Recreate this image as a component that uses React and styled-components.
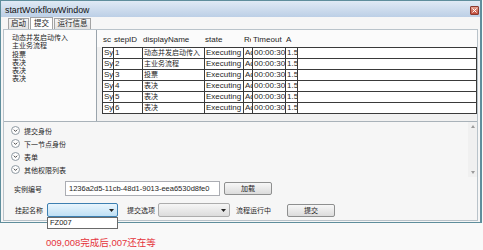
import React from 'react';
import styled, {createGlobalStyle} from 'styled-components';

const GlobalStyle = createGlobalStyle`
  body {
    margin: 0;
    background: #f9f9f9;
    font-family: "Liberation Sans", "Noto Sans CJK SC", sans-serif;
    color: #1e1e1e;
  }
`

const Window = styled.div`
  width: 479px;
  height: 221px;
  border: 1px solid #5f8e9c;
  border-right-width: 2px;
  background: #f6f6f6;
  display: flex;
  flex-direction: column;
`

const TitleBar = styled.div`
  height: 16px;
  box-sizing: border-box;
  padding: 2px 1px 0 4px;
  display: flex;
  align-items: center;
  justify-content: space-between;
  background: linear-gradient(#e0eaf5, #bccfe6);
  font-size: 8.8px;
  color: #111;
`

const CloseButton = styled.div`
  width: 7px;
  height: 7px;
  border: 1px solid #8a3a30;
  border-radius: 1px;
  background: linear-gradient(#e6a494, #c24a3a);
  display: flex;
  align-items: center;
  justify-content: center;
`

const TabStrip = styled.div`
  height: 12px;
  padding-left: 7px;
  display: flex;
  align-items: flex-end;
  gap: 1px;
`

const Tab = styled.div`
  width: ${({width}) => width}px;
  height: ${({active}) => (active ? 12 : 11)}px;
  box-sizing: border-box;
  border: 1px solid #a3a3a3;
  border-bottom: none;
  background: ${({active}) => (active ? '#ffffff' : 'linear-gradient(#f4f4f4, #e3e3e3)')};
  font-size: 7.5px;
  line-height: ${({active}) => (active ? 11 : 10)}px;
  text-align: center;
`

const Panel = styled.div`
  flex: 1;
  margin: 0 2px 1px 2px;
  border: 1px solid #b9c3ca;
  background: #f6f6f6;
  display: flex;
  flex-direction: column;
`

const TopArea = styled.div`
  height: 91px;
  display: flex;
  border-bottom: 1px solid #a9b2b9;
`

const ListBox = styled.div`
  width: 93px;
  border-right: 1px solid #9aa4ac;
  background: #fbfbfb;
  padding: 4px 0 0 8px;
  box-sizing: border-box;
`

const ListItem = styled.div`
  font-size: 7px;
  line-height: 8.3px;
`

const Grid = styled.div`
  flex: 1;
  background: #f1f1f1;
  display: flex;
  flex-direction: column;
`

const HeaderRow = styled.div`
  height: 17px;
  box-sizing: border-box;
  padding: 3px 0 0 5px;
  display: flex;
  background: #fbfbfb;
  font-size: 8px;
  line-height: 14px;
`

const RowBox = styled.div`
  margin-left: 5px;
  border: 1px solid #3a3a3a;
  border-top: none;
  background: #fff;
`

const Row = styled.div`
  height: 10px;
  display: flex;
  border-top: 1px solid #3a3a3a;
  font-size: 8px;
  line-height: 10px;
`

const Cell = styled.div`
  width: ${({w}) => w}px;
  flex-shrink: 0;
  box-sizing: border-box;
  padding-left: 1px;
  border-right: 1px solid ${({lined}) => (lined ? '#3a3a3a' : 'transparent')};
  overflow: hidden;
  white-space: nowrap;
  font-size: ${({cjk}) => (cjk ? 7 : 8)}px;
`

const Filler = styled.div`
  flex: 1;
`

const ExpanderArea = styled.div`
  height: 55px;
  display: flex;
`

const ExpanderList = styled.div`
  flex: 1;
  padding: 2px 0 0 7px;
`

const Expander = styled.div`
  height: 13px;
  display: flex;
  align-items: center;
  gap: 4px;
  font-size: 7px;
`

const Scrollbar = styled.div`
  width: 9px;
  background: #f0f0f0;
  display: flex;
  flex-direction: column;
  justify-content: space-between;
  align-items: center;
  padding: 3px 0;
  box-sizing: border-box;
`

const FormRow = styled.div`
  height: ${({h}) => h}px;
  margin-top: ${({top}) => top}px;
  padding-left: ${({left}) => left}px;
  display: flex;
  align-items: center;
`

const Label = styled.div`
  width: ${({w}) => w}px;
  margin-left: ${({ml}) => ml || 0}px;
  flex-shrink: 0;
  font-size: 7px;
`

const TextBox = styled.div`
  width: 155px;
  height: 15px;
  box-sizing: border-box;
  border: 1px solid #abadb3;
  background: #fff;
  padding-left: 3px;
  font-size: 7.5px;
  line-height: 13px;
`

const Button = styled.div`
  width: 48px;
  height: 13px;
  margin-left: ${({ml}) => ml || 0}px;
  box-sizing: border-box;
  border: 1px solid #8e8f8f;
  border-radius: 2px;
  background: linear-gradient(#f7f7f7, #dcdcdc);
  font-size: 7px;
  line-height: 11px;
  text-align: center;
`

const ComboWrap = styled.div`
  position: relative;
`

const Combo = styled.div`
  width: ${({w}) => w}px;
  height: 14px;
  box-sizing: border-box;
  border: 1px solid ${({active}) => (active ? '#3c7fb1' : '#acacac')};
  border-radius: 2px;
  background: ${({active}) => (active ? 'linear-gradient(#e8f5fd, #bfe0f5)' : 'linear-gradient(#f6f6f6, #dcdcdc)')};
  display: flex;
  align-items: center;
  justify-content: flex-end;
  padding-right: 3px;
`

const Popup = styled.div`
  position: absolute;
  top: 100%;
  left: 0;
  width: 100%;
  height: 12px;
  box-sizing: border-box;
  border: 1px solid #6a6a6a;
  background: #fff;
  padding-left: 2px;
  font-size: 7.5px;
  line-height: 10px;
  z-index: 2;
`

const Note = styled.div`
  margin-top: 14px;
  padding-left: 46px;
  font-size: 9.5px;
  line-height: 12px;
  color: #e5343c;
`

const columns = [
  {key: 'sc', title: 'sc', w: 11},
  {key: 'step', title: 'stepID', w: 29},
  {key: 'name', title: 'displayName', w: 62, cjk: true},
  {key: 'state', title: 'state', w: 39},
  {key: 're', title: 'Re', w: 9},
  {key: 'timeout', title: 'Timeout', w: 33},
  {key: 'a', title: 'A', w: 12},
]

const steps = ['动态并发启动传入', '主业务流程', '投票', '表决', '表决', '表决']

const rows = steps.map((name, i) => ({
  sc: 'Sy', step: String(i + 1), name, state: 'Executing', re: 'Ac', timeout: '00:00:30', a: '1.5',
}))

const Arrow = () => (
  <svg width="5" height="3" viewBox="0 0 5 3"><path d="M0 0 L5 0 L2.5 3 Z" fill="#222"/></svg>
)

const Chevron = () => (
  <svg width="9" height="9" viewBox="0 0 9 9">
    <circle cx="4.5" cy="4.5" r="4" fill="#fdfdfd" stroke="#8f9aa3"/>
    <path d="M2.8 3.7 L4.5 5.4 L6.2 3.7" fill="none" stroke="#333" strokeWidth="0.9"/>
  </svg>
)

const App = () => (
  <>
    <GlobalStyle/>
    <Window>
      <TitleBar>
        <span>startWorkflowWindow</span>
        <CloseButton>
          <svg width="5" height="5" viewBox="0 0 5 5">
            <path d="M0.5 0.5 L4.5 4.5 M4.5 0.5 L0.5 4.5" stroke="#fff" strokeWidth="1"/>
          </svg>
        </CloseButton>
      </TitleBar>
      <TabStrip>
        <Tab width={21}>启动</Tab>
        <Tab width={23} active>提交</Tab>
        <Tab width={37}>运行信息</Tab>
      </TabStrip>
      <Panel>
        <TopArea>
          <ListBox>
            {steps.map((s, i) => <ListItem key={i}>{s}</ListItem>)}
          </ListBox>
          <Grid>
            <HeaderRow>
              {columns.map((c) => <Cell key={c.key} w={c.w}>{c.title}</Cell>)}
            </HeaderRow>
            <RowBox>
              {rows.map((r, i) => (
                <Row key={i}>
                  {columns.map((c) => <Cell key={c.key} w={c.w} cjk={c.cjk} lined>{r[c.key]}</Cell>)}
                  <Filler/>
                </Row>
              ))}
            </RowBox>
          </Grid>
        </TopArea>
        <ExpanderArea>
          <ExpanderList>
            {['提交身份', '下一节点身份', '表单', '其他权限列表'].map((t) => (
              <Expander key={t}><Chevron/>{t}</Expander>
            ))}
          </ExpanderList>
          <Scrollbar>
            <svg width="4" height="3" viewBox="0 0 4 3"><path d="M0 3 L4 3 L2 0 Z" fill="#9a9a9a"/></svg>
            <svg width="4" height="3" viewBox="0 0 4 3"><path d="M0 0 L4 0 L2 3 Z" fill="#9a9a9a"/></svg>
          </Scrollbar>
        </ExpanderArea>
        <FormRow h={15} top={4} left={10}>
          <Label w={51}>实例编号</Label>
          <TextBox>1236a2d5-11cb-48d1-9013-eea6530d8fe0</TextBox>
          <Button ml={4}>加载</Button>
        </FormRow>
        <FormRow h={14} top={7} left={11}>
          <Label w={32}>挂起名称</Label>
          <ComboWrap>
            <Combo w={71} active><Arrow/></Combo>
            <Popup>FZ007</Popup>
          </ComboWrap>
          <Label w={31} ml={9}>提交选项</Label>
          <Combo w={72}><Arrow/></Combo>
          <Label w={51} ml={6}>流程运行中</Label>
          <Button>提交</Button>
        </FormRow>
      </Panel>
    </Window>
    <Note>009,008完成后,007还在等</Note>
  </>
)

export default App;
